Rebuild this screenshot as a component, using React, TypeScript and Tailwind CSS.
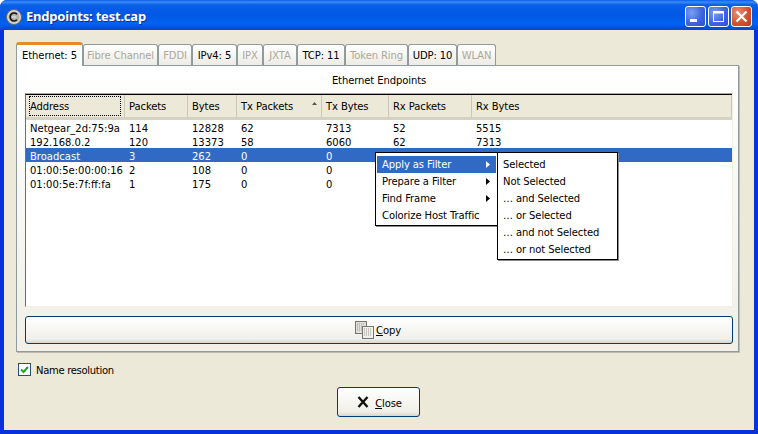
const tabs = [
  { label: "Ethernet: 5", width: "w-[67px]", active: true, enabled: true },
  { label: "Fibre Channel", width: "w-[75px]", active: false, enabled: false },
  { label: "FDDI", width: "w-[34px]", active: false, enabled: false },
  { label: "IPv4: 5", width: "w-[45px]", active: false, enabled: true },
  { label: "IPX", width: "w-[26px]", active: false, enabled: false },
  { label: "JXTA", width: "w-[34px]", active: false, enabled: false },
  { label: "TCP: 11", width: "w-[48px]", active: false, enabled: true },
  { label: "Token Ring", width: "w-[63px]", active: false, enabled: false },
  { label: "UDP: 10", width: "w-[49px]", active: false, enabled: true },
  { label: "WLAN", width: "w-[39px]", active: false, enabled: false },
];

const columns = ["Address", "Packets", "Bytes", "Tx Packets", "Tx Bytes", "Rx Packets", "Rx Bytes"];

const rows = [
  ["Netgear_2d:75:9a", "114", "12828", "62", "7313", "52", "5515"],
  ["192.168.0.2", "120", "13373", "58", "6060", "62", "7313"],
  ["Broadcast", "3", "262", "0", "0", "", ""],
  ["01:00:5e:00:00:16", "2", "108", "0", "0", "", ""],
  ["01:00:5e:7f:ff:fa", "1", "175", "0", "0", "", ""],
];

const gridCols = "grid grid-cols-[99px_63px_49px_85px_67px_83px_1fr]";

function AppIcon() {
  return (
    <svg width="16" height="16" viewBox="0 0 16 16" className="shrink-0">
      <circle cx="8" cy="8" r="7.5" fill="#d8d6d0" stroke="#6b6963" strokeWidth="1" />
      <circle cx="8" cy="8" r="5.5" fill="#b5b2ab" />
      <path d="M11 5.2A4 4 0 1 0 11 10.8" fill="none" stroke="#111" strokeWidth="1.6" />
      <path d="M6 8h4" stroke="#eee" strokeWidth="1" />
    </svg>
  );
}

function WindowButton({ kind }: { kind: "min" | "max" | "close" }) {
  const bg =
    kind === "close"
      ? "bg-[radial-gradient(circle_at_30%_30%,#e8937a,#d8502c_55%,#c23a17)]"
      : "bg-[radial-gradient(circle_at_30%_30%,#7c9ff0,#3c66e0_55%,#2a4fc8)]";
  return (
    <div className={`flex h-[21px] w-[21px] items-center justify-center rounded-[3px] border border-white ${bg}`}>
      <svg width="13" height="13" viewBox="0 0 13 13">
        {kind === "min" && <rect x="1" y="9" width="7" height="3" fill="#fff" />}
        {kind === "max" && (
          <g fill="none" stroke="#fff">
            <rect x="1.5" y="1.5" width="10" height="10" />
            <path d="M1 2.5h11" strokeWidth="2" />
          </g>
        )}
        {kind === "close" && <path d="M1.5 1.5l10 10M11.5 1.5l-10 10" stroke="#fff" strokeWidth="2.2" />}
      </svg>
    </div>
  );
}

function CopyIcon() {
  return (
    <svg width="20" height="18" viewBox="0 0 20 18" className="shrink-0">
      <g stroke="#77756c" fill="#e2e0da">
        <rect x="0.5" y="0.5" width="11" height="12" />
        <rect x="7.5" y="5.5" width="11" height="12" fill="#f1f0ea" />
      </g>
      <path d="M2 3h8M2 5h5M2 7h5M2 9h5" stroke="#9a9a94" strokeDasharray="1 1" />
      <path d="M9 8h8M9 10h8M9 12h8M9 14h8" stroke="#9a9a94" strokeDasharray="1 1" />
    </svg>
  );
}

function CloseIcon() {
  return (
    <svg width="12" height="12" viewBox="0 0 12 12" className="shrink-0">
      <path d="M1.5 1l9 10M10.5 1l-9 10" stroke="#111" strokeWidth="2.4" />
    </svg>
  );
}

function Arrow({ white }: { white?: boolean }) {
  return (
    <svg width="4" height="7" viewBox="0 0 4 7" className="absolute right-[6px] top-[5px]">
      <path d="M0 0l4 3.5L0 7z" fill={white ? "#fff" : "#000"} />
    </svg>
  );
}

function Tab({ tab }: { tab: (typeof tabs)[number] }) {
  if (tab.active) {
    return (
      <div className={`${tab.width} relative z-10 -mb-px flex h-[24px] shrink-0 items-center justify-center rounded-t-[3px] border-x border-[#919b9c] border-t-[3px] border-t-[#e68b2c] bg-white pt-px text-black`}>
        {tab.label}
      </div>
    );
  }
  return (
    <div className={`${tab.width} flex h-[21px] shrink-0 items-center justify-center rounded-t-[3px] border-x border-t border-[#919b9c] bg-[linear-gradient(#fff,#ecebe5)] pt-[2px] ${tab.enabled ? "text-black" : "text-[#aca899]"}`}>
      {tab.label}
    </div>
  );
}

function EndpointTable() {
  return (
    <div className="flex h-[214px] flex-col border border-[#f1efe2] border-l-[#716f64] border-t-[#aca899]">
      <div className={`${gridCols} h-[26px] border-t border-t-black bg-[#ece9d8] pb-[3px] shadow-[inset_0_-3px_0_#d6d2c2]`}>
        {columns.map((col, i) => (
          <div key={col} className="relative flex items-center border-r border-r-[#cbc7b8] pl-1 pt-[2px]">
            {i === 0 && <div className="absolute inset-x-[3px] inset-y-[1px] border border-dotted border-black" />}
            <span>{col}</span>
            {col === "Tx Packets" && (
              <svg width="5" height="3" viewBox="0 0 5 3" className="absolute right-[4px] top-[7px]">
                <path d="M2.5 0L5 3H0z" fill="#555" />
              </svg>
            )}
          </div>
        ))}
      </div>
      <div className="flex-1 bg-white tracking-normal">
        {rows.map((row) => {
          const selected = row[0] === "Broadcast";
          return (
            <div key={row[0]} className={`${gridCols} h-[14px] items-start ${selected ? "bg-[#316ac5] text-white" : "text-black"}`}>
              {row.map((cell, i) => (
                <span key={i} className="whitespace-nowrap pl-1 pt-[4px]">
                  {cell}
                </span>
              ))}
            </div>
          );
        })}
      </div>
    </div>
  );
}

function ContextMenus() {
  return (
    <>
      <div className="absolute left-[375px] top-[152px] z-20 h-[74px] w-[123px] border border-black bg-white px-px pt-[3px] shadow-[1px_1px_0_#8a8a8a]">
        {["Apply as Filter", "Prepare a Filter", "Find Frame", "Colorize Host Traffic"].map((item, i) => (
          <div key={item} className={`relative flex h-[17px] items-center pl-[5px] ${i === 0 ? "bg-[#316ac5] text-white" : "text-black"}`}>
            {item}
            {i < 3 && <Arrow white={i === 0} />}
          </div>
        ))}
      </div>
      <div className="absolute left-[497px] top-[152px] z-30 h-[108px] w-[121px] border border-black bg-white pt-[3px] shadow-[1px_1px_0_#8a8a8a]">
        {["Selected", "Not Selected", "… and Selected", "… or Selected", "… and not Selected", "… or not Selected"].map((item) => (
          <div key={item} className="flex h-[17px] items-center pl-[5px] text-black">
            {item}
          </div>
        ))}
      </div>
    </>
  );
}

export default function App() {
  return (
    <div className="relative flex h-[434px] w-[758px] flex-col overflow-hidden rounded-t-[7px] bg-[#0831d9] font-['DejaVu_Sans',sans-serif] text-[10px] leading-none tracking-[-0.1px] text-black">
      <div className="flex h-[30px] shrink-0 items-center bg-[linear-gradient(#0a5de8,#3a8bf5_7%,#0a5fe8_16%,#0058e4_50%,#0063f0_80%,#0048c8)] pl-[6px] pr-[6px] pt-[3px]">
        <AppIcon />
        <span className="ml-[4px] flex-1 font-['Noto_Sans',sans-serif] text-[13px] font-bold tracking-[-0.2px] text-white [text-shadow:1px_1px_#0f2f8f]">Endpoints: test.cap</span>
        <div className="flex gap-[2px]">
          <WindowButton kind="min" />
          <WindowButton kind="max" />
          <WindowButton kind="close" />
        </div>
      </div>

      <div className="mx-[4px] mb-[4px] flex flex-1 flex-col bg-[#ece9d8] pl-[12px] pr-[15px] pt-[12px]">
        <div className="flex h-[23px] items-end">
          {tabs.map((tab) => (
            <Tab key={tab.label} tab={tab} />
          ))}
        </div>

        <div className="flex h-[287px] flex-col border border-[#919b9c] bg-[linear-gradient(#fff,#f1efe6)] pl-[8px] pr-[5px] shadow-[1px_1px_0_#bdbab0]">
          <div className="flex h-[27px] shrink-0 items-center justify-center pt-[3px]">Ethernet Endpoints</div>
          <EndpointTable />
          <button className="mt-[9px] flex h-[28px] w-full items-center justify-center gap-px rounded-[3px] border border-[#003c74] bg-[linear-gradient(#fff,#f0efe8_85%,#d9d6c8)] pr-[2px]">
            <CopyIcon />
            <span className="pt-[2px]">
              <span className="underline">C</span>opy
            </span>
          </button>
        </div>

        <div className="mt-[10px] flex h-[14px] items-center gap-[5px] pl-[2px]">
          <div className="flex h-[13px] w-[13px] items-center justify-center border border-[#1c5180] bg-white">
            <svg width="9" height="9" viewBox="0 0 9 9">
              <path d="M1 4.5l2.5 2.5L8 2" fill="none" stroke="#21a121" strokeWidth="2" />
            </svg>
          </div>
          <span className="pt-[4px] tracking-[-0.3px]">Name resolution</span>
        </div>

        <div className="mt-[11px] flex justify-center pl-[2px]">
          <button className="flex h-[30px] w-[83px] items-center justify-center gap-[6px] rounded-[3px] border border-[#003c74] bg-[linear-gradient(#fff,#f0efe8_85%,#d9d6c8)] pl-[2px]">
            <CloseIcon />
            <span className="pt-[4px]">
              <span className="underline">C</span>lose
            </span>
          </button>
        </div>
      </div>

      <ContextMenus />
    </div>
  );
}
